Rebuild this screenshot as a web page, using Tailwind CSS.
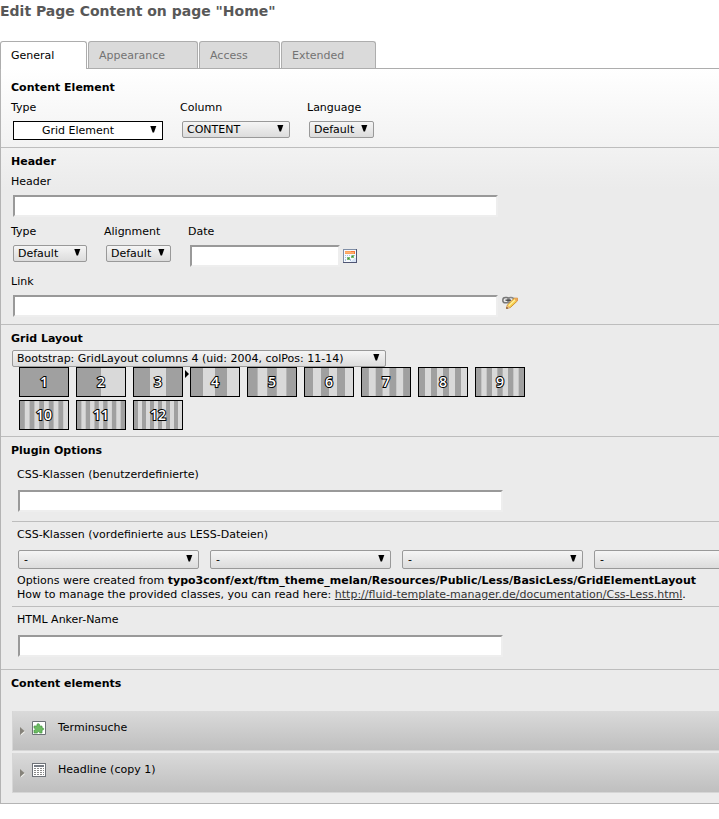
<!DOCTYPE html>
<html lang="en">
<head>
<meta charset="utf-8">
<title>Edit Page Content on page "Home"</title>
<script src="https://cdn.jsdelivr.net/npm/@tailwindcss/browser@4"></script>
</head>
<body class="overflow-x-hidden bg-white text-[11px] leading-5 text-black font-['DejaVu_Sans',Verdana,sans-serif]">
<svg class="hidden">
  <symbol id="arrow" viewBox="0 0 7 7"><path d="M0.300 0H6.300L4 6.500H2.600Z"/></symbol>
  <symbol id="expand" viewBox="0 0 5 8"><path d="M1 1L5 5L1 8.500Z" fill="#f2f2ee"/><path d="M0 0L4.500 4L0 8Z" fill="#85827a"/></symbol>
</svg>

<h1 class="h-[22px] text-sm leading-[22px] font-bold whitespace-nowrap text-[#585858]">Edit Page Content on page "Home"</h1>

<nav class="mt-[19px] flex gap-px border-b border-[#adadad] text-[#737373]">
  <button type="button" class="-mb-px h-7 w-[87px] rounded-t-[3px] border border-b-0 border-[#adadad] bg-white px-[10px] pt-px text-left text-black">General</button>
  <button type="button" class="h-[27px] w-[110px] rounded-t-[3px] border border-b-0 border-[#adadad] bg-[#dadada] px-[10px] pt-[2px] text-left">Appearance</button>
  <button type="button" class="h-[27px] w-[81px] rounded-t-[3px] border border-b-0 border-[#adadad] bg-[#dadada] px-[10px] pt-[2px] text-left">Access</button>
  <button type="button" class="h-[27px] w-[95px] rounded-t-[3px] border border-b-0 border-[#adadad] bg-[#dadada] px-[10px] pt-[2px] text-left">Extended</button>
</nav>

<main class="border-b border-l border-[#b4b4b4] bg-[#ebebeb] bg-[linear-gradient(#ffffff,#ebebeb_120px)] bg-no-repeat">
  <section class="border-b border-[#bdbdbd] px-[10px] pt-[9px] pb-[7px]">
    <h2 class="font-bold">Content Element</h2>
    <div class="flex">
      <div class="w-[169px]">
        <label for="ctype" class="block">Type</label>
        <div class="relative mt-[3px] ml-[2px] w-[150px]">
          <select id="ctype" class="block h-[19px] w-full appearance-none border border-black bg-white pl-7 leading-[17px]"><option>Grid Element</option></select>
          <svg class="pointer-events-none absolute top-[5px] right-[6px] h-[7px] w-[7px]"><use href="#arrow"/></svg>
        </div>
      </div>
      <div class="w-[127px]">
        <label for="col" class="block">Column</label>
        <div class="relative mt-[3px] ml-[2px] w-[108px]">
          <select id="col" class="block h-[17px] w-full appearance-none rounded-[2px] border border-[#999] bg-linear-to-b from-[#f5f5f5] to-[#dcdcdc] pl-1 leading-[15px]"><option>CONTENT</option></select>
          <svg class="pointer-events-none absolute top-1 right-[6px] h-[7px] w-[7px]"><use href="#arrow"/></svg>
        </div>
      </div>
      <div>
        <label for="lang" class="block">Language</label>
        <div class="relative mt-[3px] ml-[2px] w-[65px]">
          <select id="lang" class="block h-[17px] w-full appearance-none rounded-[2px] border border-[#999] bg-linear-to-b from-[#f5f5f5] to-[#dcdcdc] pl-1 leading-[15px]"><option>Default</option></select>
          <svg class="pointer-events-none absolute top-1 right-[6px] h-[7px] w-[7px]"><use href="#arrow"/></svg>
        </div>
      </div>
    </div>
  </section>

  <section class="border-b border-[#bdbdbd] px-[10px] pt-1 pb-[7px]">
    <h2 class="font-bold">Header</h2>
    <label for="header" class="block">Header</label>
    <input id="header" type="text" class="mt-[3px] ml-[2px] block h-[22px] w-[485px] border-2 border-t-[#999] border-r-[#eee] border-b-[#eee] border-l-[#999] bg-white px-1">
    <div class="mt-[5px] flex">
      <div class="w-[93px]">
        <label for="htype" class="block">Type</label>
        <div class="relative mt-[3px] ml-[2px] w-[74px]">
          <select id="htype" class="block h-[17px] w-full appearance-none rounded-[2px] border border-[#999] bg-linear-to-b from-[#f5f5f5] to-[#dcdcdc] pl-1 leading-[15px]"><option>Default</option></select>
          <svg class="pointer-events-none absolute top-1 right-[6px] h-[7px] w-[7px]"><use href="#arrow"/></svg>
        </div>
      </div>
      <div class="w-[84px]">
        <label for="align" class="block">Alignment</label>
        <div class="relative mt-[3px] ml-[2px] w-[65px]">
          <select id="align" class="block h-[17px] w-full appearance-none rounded-[2px] border border-[#999] bg-linear-to-b from-[#f5f5f5] to-[#dcdcdc] pl-1 leading-[15px]"><option>Default</option></select>
          <svg class="pointer-events-none absolute top-1 right-[6px] h-[7px] w-[7px]"><use href="#arrow"/></svg>
        </div>
      </div>
      <div>
        <label for="date" class="block">Date</label>
        <div class="mt-[3px] ml-[2px] flex items-center gap-[3px]">
          <input id="date" type="text" class="block h-[22px] w-[150px] border-2 border-t-[#999] border-r-[#eee] border-b-[#eee] border-l-[#999] bg-white px-1">
          <button type="button" aria-label="Pick a date">
            <svg class="block h-[14px] w-[14px]" viewBox="0 0 14 14" shape-rendering="crispEdges">
              <path d="M0 0H14V14H0Z" fill="#7f8ea6"/><path d="M13 0H14V14H0V13H13Z" fill="#4f5573"/><path d="M1 1H13V13H1Z" fill="#f6f9fc"/>
              <path d="M2 2H12V5H2Z" fill="#f9a25c"/><path d="M2 3H12V4H2Z" fill="#ffb070"/><path d="M8 2H12V3H8ZM11 3H12V5H11Z" fill="#f5793a"/>
              <path d="M2 6H3V7H2ZM4 6H5V7H4ZM6 6H7V7H6ZM8 6H9V7H8ZM10 6H12V7H10ZM2 8H3V9H2ZM4 8H5V9H4ZM6 8H7V9H6ZM8 8H9V9H8ZM2 10H3V12H2ZM7 10H8V12H7Z" fill="#a9bfdf"/>
              <path d="M8 6H11V9H8V7H9V6ZM4 8H7V11H4Z" fill="#7cba74"/><path d="M9 7H10V8H9ZM5 9H6V10H5Z" fill="#3d8f3d"/>
              <path d="M11 9H13V13H8V12H9V11H10V10H11Z" fill="#d9e5f5"/>
            </svg>
          </button>
        </div>
      </div>
    </div>
    <label for="link" class="mt-[5px] block">Link</label>
    <div class="mt-[3px] ml-[2px] flex items-start gap-1">
      <input id="link" type="text" class="block h-[22px] w-[485px] border-2 border-t-[#999] border-r-[#eee] border-b-[#eee] border-l-[#999] bg-white px-1">
      <button type="button" aria-label="Edit link">
        <svg class="block h-4 w-4" viewBox="0 0 16 16">
          <rect x="0.800" y="2.600" width="6.400" height="5.200" rx="2.600" fill="none" stroke="#777" stroke-width="1.500"/>
          <rect x="5.800" y="2.600" width="6" height="5.200" rx="2.600" fill="none" stroke="#888" stroke-width="1.500"/>
          <path d="M3.500 5.200H9" stroke="#444" stroke-width="1.300"/>
          <path d="M4.500 13.300L5.300 10L12.300 3.200L15.600 3.200L15.500 5.800L8.300 12.600Z" fill="#f7cf4c" stroke="#c8892c" stroke-width="0.900"/>
          <path d="M6.700 10.700L13 4.700" stroke="#fff0a0" stroke-width="1.300"/>
          <path d="M12.300 3.200L15.600 3.200L15.500 5.800L14.300 6.700Z" fill="#eea45d"/>
          <path d="M4.300 13.600L5.200 10.400L7.900 12.700Z" fill="#e9b98a"/><path d="M4.200 13.800L4.700 12L6.400 13.200Z" fill="#5b3512"/>
        </svg>
      </button>
    </div>
  </section>

  <section class="border-b border-[#bdbdbd] px-[10px] pt-1 pb-[3px]">
    <h2 class="font-bold"><label for="layout">Grid Layout</label></h2>
    <div class="relative mt-px ml-px w-[374px]">
      <select id="layout" class="block h-[17px] w-full appearance-none rounded-[2px] border border-[#999] bg-linear-to-b from-[#f5f5f5] to-[#dcdcdc] pl-1 leading-[15px]"><option>Bootstrap: GridLayout columns 4 (uid: 2004, colPos: 11-14)</option></select>
      <svg class="pointer-events-none absolute top-1 right-[6px] h-[7px] w-[7px]"><use href="#arrow"/></svg>
    </div>
    <div id="thumbs" class="ml-2 grid w-[513px] grid-cols-9 gap-y-[3px] pb-[3px]"></div>
  </section>

  <section class="border-b border-[#bdbdbd] pt-1 pl-[10px]">
    <h2 class="font-bold">Plugin Options</h2>
    <div class="ml-px border-b border-[#bdbdbd] pt-1 pb-[9px] pl-[5px]">
      <label for="css" class="block">CSS-Klassen (benutzerdefinierte)</label>
      <input id="css" type="text" class="mt-[5px] ml-px block h-[22px] w-[485px] border-2 border-t-[#999] border-r-[#eee] border-b-[#eee] border-l-[#999] bg-white px-1">
    </div>
    <div class="ml-px overflow-hidden border-b border-[#bdbdbd] pt-[3px] pb-1 pl-[5px]">
      <label for="less1" class="block">CSS-Klassen (vordefinierte aus LESS-Dateien)</label>
      <div class="mt-[5px] ml-px flex gap-[11px]">
        <div class="relative w-[181px] shrink-0">
          <select id="less1" class="block h-[19px] w-full appearance-none rounded-[2px] border border-[#999] bg-linear-to-b from-[#f5f5f5] to-[#dcdcdc] pl-[5px] leading-[17px]"><option>-</option></select>
          <svg class="pointer-events-none absolute top-[5px] right-[6px] h-[7px] w-[7px]"><use href="#arrow"/></svg>
        </div>
        <div class="relative w-[181px] shrink-0">
          <select aria-label="LESS class 2" class="block h-[19px] w-full appearance-none rounded-[2px] border border-[#999] bg-linear-to-b from-[#f5f5f5] to-[#dcdcdc] pl-[5px] leading-[17px]"><option>-</option></select>
          <svg class="pointer-events-none absolute top-[5px] right-[6px] h-[7px] w-[7px]"><use href="#arrow"/></svg>
        </div>
        <div class="relative w-[181px] shrink-0">
          <select aria-label="LESS class 3" class="block h-[19px] w-full appearance-none rounded-[2px] border border-[#999] bg-linear-to-b from-[#f5f5f5] to-[#dcdcdc] pl-[5px] leading-[17px]"><option>-</option></select>
          <svg class="pointer-events-none absolute top-[5px] right-[6px] h-[7px] w-[7px]"><use href="#arrow"/></svg>
        </div>
        <div class="relative w-[181px] shrink-0">
          <select aria-label="LESS class 4" class="block h-[19px] w-full appearance-none rounded-[2px] border border-[#999] bg-linear-to-b from-[#f5f5f5] to-[#dcdcdc] pl-[5px] leading-[17px]"><option>-</option></select>
          <svg class="pointer-events-none absolute top-[5px] right-[6px] h-[7px] w-[7px]"><use href="#arrow"/></svg>
        </div>
      </div>
      <p class="mt-[5px] leading-[14px] whitespace-nowrap">Options were created from <b>typo3conf/ext/ftm_theme_melan/Resources/Public/Less/BasicLess/GridElementLayout</b><br>How to manage the provided classes, you can read here: <a href="#" class="text-[#333] underline">http://fluid-template-manager.de/documentation/Css-Less.html</a>.</p>
    </div>
    <div class="ml-px pt-[3px] pb-3 pl-[5px]">
      <label for="anchor" class="block">HTML Anker-Name</label>
      <input id="anchor" type="text" class="mt-[5px] ml-px block h-[22px] w-[485px] border-2 border-t-[#999] border-r-[#eee] border-b-[#eee] border-l-[#999] bg-white px-1">
    </div>
  </section>

  <section class="pt-1 pb-[10px] pl-[11px]">
    <h2 class="-ml-px font-bold">Content elements</h2>
    <ul class="mt-[17px] flex flex-col gap-[2px]">
      <li class="flex h-10 items-start border-b border-l border-[#d6d6d6] bg-linear-to-b from-[#dadada] to-[#bfbfbf] pt-[7px] pl-[7px]">
        <button type="button" aria-label="Expand Terminsuche" class="mt-[9px]"><svg class="block h-2 w-[5px] overflow-visible"><use href="#expand"/></svg></button>
        <svg class="mt-[3px] ml-[7px] h-[14px] w-[14px]" viewBox="0 0 14 14">
          <path d="M0.500 0.500H13.500V13.500H0.500Z" fill="#fff" stroke="#6e7278"/>
          <path d="M2 5H5V4.200C4.300 2.300 8.200 2.300 7.500 4.200V5H10V7C12.300 6.300 12.300 9.600 10 9V12H7.600C8 10.200 5 10.200 5.400 12H2V9C4 9.400 4 6.800 2 7.200Z" fill="#6dbb62" stroke="#489947" stroke-width="0.700"/>
        </svg>
        <span class="ml-3">Terminsuche</span>
      </li>
      <li class="flex h-10 items-start border-b border-l border-[#d6d6d6] bg-linear-to-b from-[#dadada] to-[#bfbfbf] pt-[7px] pl-[7px]">
        <button type="button" aria-label="Expand Headline (copy 1)" class="mt-[9px]"><svg class="block h-2 w-[5px] overflow-visible"><use href="#expand"/></svg></button>
        <svg class="mt-[3px] ml-[7px] h-[14px] w-[14px]" viewBox="0 0 14 14" shape-rendering="crispEdges">
          <path d="M0.500 0.500H13.500V13.500H0.500Z" fill="#fff" stroke="#6e7278"/>
          <path d="M2 3H12" stroke="#777c84" stroke-width="2"/>
          <path d="M2 5.500H12M2 7.500H12M2 9.500H12M2 11.500H12" stroke="#8a8a8a" stroke-dasharray="2 1"/>
        </svg>
        <span class="ml-3">Headline (copy 1)</span>
      </li>
    </ul>
  </section>
</main>

<script>
  // One preview per column count; the dash pattern alternates dark and light columns.
  const current = 4;
  document.getElementById('thumbs').innerHTML = Array.from({ length: 12 }, (_, i) => {
    const n = i + 1;
    const marker = n === current
      ? '<svg class="absolute top-[3px] -left-[5px] h-2 w-1" viewBox="0 0 4 8"><path d="M0 0L4 4L0 8Z"/></svg>' : '';
    return `<div class="relative">${marker}<button type="button" class="relative block h-[30px] w-[50px] border border-black bg-[#d9d9d9]">
      <svg class="absolute inset-0 h-full w-full" viewBox="0 0 48 28"><path d="M0 14H48" stroke="#a0a0a0" stroke-width="28" pathLength="${n}" stroke-dasharray="${n === 1 ? 'none' : '1'}"/></svg>
      <span class="relative block text-center text-sm leading-7 font-semibold text-white font-['Open_Sans',sans-serif] [-webkit-text-stroke:2px_black] [paint-order:stroke_fill]">${n}</span>
    </button></div>`;
  }).join('');
</script>
</body>
</html>
